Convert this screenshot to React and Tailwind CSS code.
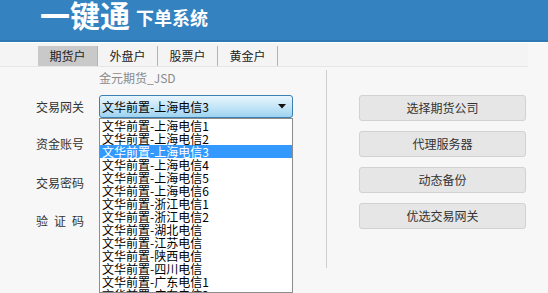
import React from 'react';

const gateways = [
  '文华前置-上海电信1',
  '文华前置-上海电信2',
  '文华前置-上海电信3',
  '文华前置-上海电信4',
  '文华前置-上海电信5',
  '文华前置-上海电信6',
  '文华前置-浙江电信1',
  '文华前置-浙江电信2',
  '文华前置-湖北电信',
  '文华前置-江苏电信',
  '文华前置-陕西电信',
  '文华前置-四川电信',
  '文华前置-广东电信1',
  '文华前置-广东电信2',
];

const tabs = ['期货户', '外盘户', '股票户', '黄金户'];
const actions = ['选择期货公司', '代理服务器', '动态备份', '优选交易网关'];

const App = () => {
  const selected = 2;

  return (
    <div className="w-[548px] h-[293px] overflow-hidden bg-[#f7f7f7] font-['Noto_Sans_CJK_SC','Noto_Sans',sans-serif] text-[#333]">
      {/* Header */}
      <header className="h-[42px] bg-[#3482c0] border-b-2 border-[#2f78b4] flex items-start pl-[40px] text-white">
        <span className="text-[30px] leading-[28px] font-bold">一键通</span>
        <span className="text-[18px] leading-[18px] font-bold ml-[6px] mt-[8px]">下单系统</span>
      </header>
      <div className="h-px bg-white" />

      {/* Tabs */}
      <nav className="h-[24px] w-[528px] pl-[38px] pt-[3px] flex border-b border-[#e6e6e6] bg-[#f4f4f4]">
        {tabs.map((t, i) => (
          <div
            key={t}
            className={`w-[60px] h-[20px] flex items-center justify-center text-[12px] leading-none border-r border-[#b4b4b4] text-[#222] ${
              i === 0 ? 'bg-[#c9c9c9]' : ''
            }`}
          >
            {t}
          </div>
        ))}
      </nav>

      {/* Body */}
      <main className="flex items-start">
        <section className="w-[326px] shrink-0">
          <div className="pl-[99px] h-[22px] text-[12px] leading-[22px] text-[#8a8a8a]">金元期货_JSD</div>

          <div className="mt-[6px] h-[23px] flex items-center">
            <span className="w-[99px] pl-[36px] text-[12px]">交易网关</span>
            <div className="relative w-[194px] h-[23px]">
              <div className="h-full rounded-[3px] border border-[#3c7fb1] bg-gradient-to-b from-[#e8f5fd] via-[#c6e6f7] to-[#9dd3f0] flex items-center pl-[2px] pr-[6px]">
                <span className="flex-1 text-[12px] leading-none text-black">{gateways[selected]}</span>
                <svg width="8" height="5" viewBox="0 0 8 5"><path d="M0 0h8L4 4.5z" fill="#111" /></svg>
              </div>
              {/* open dropdown list */}
              <ul className="absolute left-0 top-[23px] w-[194px] h-[175px] overflow-hidden bg-white border border-[#8c8c8c] z-10">
                {gateways.map((g, i) => (
                  <li
                    key={g}
                    className={`h-[13px] pl-[2px] text-[12px] leading-[13px] whitespace-nowrap ${
                      i === selected ? 'bg-[#3399ff] text-white' : 'text-black'
                    }`}
                  >
                    {g}
                  </li>
                ))}
              </ul>
            </div>
          </div>

          <div className="mt-[14px] h-[23px] flex items-center">
            <span className="w-[99px] pl-[36px] text-[12px]">资金账号</span>
          </div>
          <div className="mt-[16px] h-[23px] flex items-center">
            <span className="w-[99px] pl-[36px] text-[12px]">交易密码</span>
          </div>
          <div className="mt-[15px] h-[23px] flex items-center">
            <span className="w-[99px] pl-[36px]">
              <span className="w-[48px] flex justify-between text-[12px]">
                <span>验</span><span>证</span><span>码</span>
              </span>
            </span>
          </div>
        </section>

        <aside className="mt-[3px] h-[198px] border-l border-[#cfcfcf] pl-[32px] pt-[25px] flex flex-col gap-[10px]">
          {actions.map((a) => (
            <button
              key={a}
              className="w-[167px] h-[26px] rounded-[3px] border border-[#d2d2d2] bg-[#e6e6e6] text-[12px] text-[#333]"
            >
              {a}
            </button>
          ))}
        </aside>
      </main>
    </div>
  );
};

export default App;
